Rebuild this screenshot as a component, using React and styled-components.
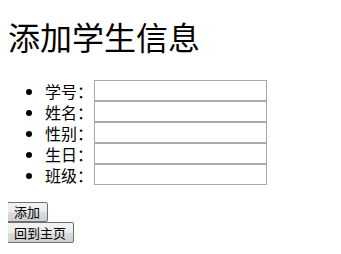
import React from 'react';
import styled, { createGlobalStyle } from 'styled-components';

const GlobalStyle = createGlobalStyle`
  body {
    margin: 8px;
    background: #fff;
    color: #000;
    font-family: "Liberation Serif", "Noto Sans CJK SC", serif;
  }
`;

const Title = styled.h1`
  font-size: 32px;
  font-weight: normal;
  line-height: 37px;
  margin: 13px 0 22px;
  font-family: "Liberation Serif", "Noto Sans CJK SC", serif;
`;

const List = styled.ul`
  margin: 0 0 17px;
  padding-left: 37px;
  list-style: disc;
`;

const Item = styled.li`
  font-size: 16px;
  line-height: 21px;
  height: 21px;
  font-family: "Noto Sans CJK SC", sans-serif;
`;

const Row = styled.div`
  display: flex;
  align-items: center;
`;

const Label = styled.span`
  width: 49px;
  flex: none;
  line-height: 20px;
`;

const Field = styled.input`
  box-sizing: border-box;
  width: 173px;
  height: 21px;
  margin: 0;
  padding: 1px 2px;
  border: 1px solid #a9a9a9;
  background: #fff;
  font-size: 13px;
  outline: none;
`;

const Actions = styled.div`
  display: flex;
  flex-direction: column;
  align-items: flex-start;
  margin-left: -2px;
`;

const Button = styled.button`
  box-sizing: border-box;
  height: ${p => (p.$tall ? 21 : 20)}px;
  padding: 0 7px;
  margin: 0;
  font-size: 13px;
  line-height: 18px;
  font-family: "Noto Sans CJK SC", sans-serif;
  color: #000;
  border: 1px solid #707070;
  border-radius: 2px;
  background: linear-gradient(#f2f2f2, #ebebeb 50%, #dddddd 51%, #cfcfcf);
`;

const fields = ['学号：', '姓名：', '性别：', '生日：', '班级：'];

export default function App() {
  return (
    <>
      <GlobalStyle />
      <Title>添加学生信息</Title>
      <List>
        {fields.map(f => (
          <Item key={f}>
            <Row>
              <Label>{f}</Label>
              <Field type="text" />
            </Row>
          </Item>
        ))}
      </List>
      <Actions>
        <Button>添加</Button>
        <Button $tall>回到主页</Button>
      </Actions>
    </>
  );
}
